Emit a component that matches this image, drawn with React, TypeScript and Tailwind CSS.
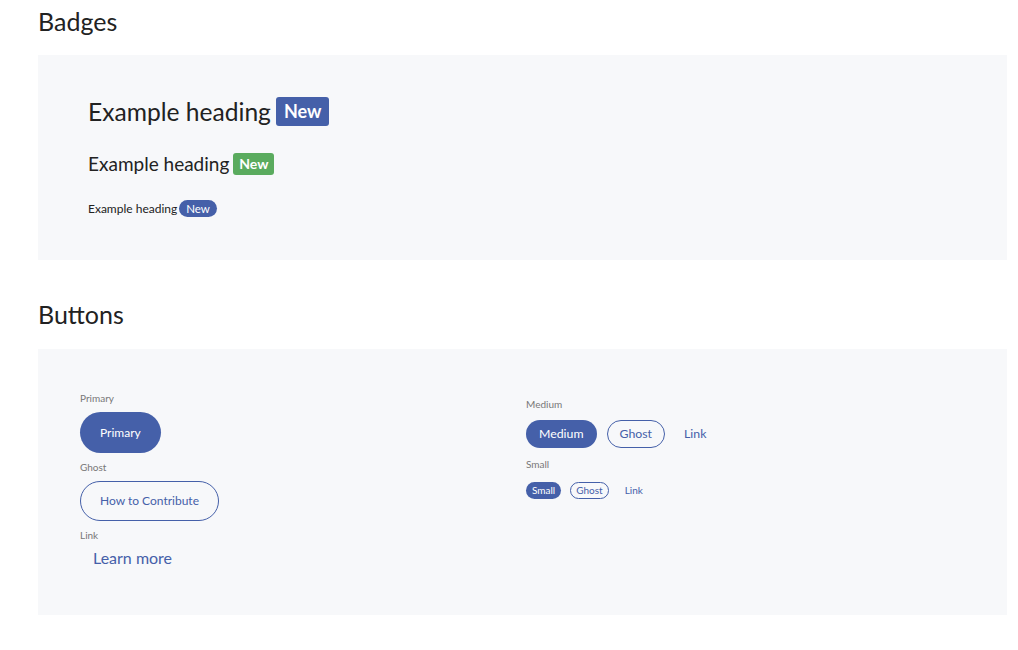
import React from "react";

const font = { fontFamily: "Lato, 'Open Sans', sans-serif" };

function Label({ children }: { children: React.ReactNode }) {
  return <div className="text-[10px] leading-[14px] text-[#777]">{children}</div>;
}

export default function App() {
  return (
    <div className="min-h-[650px] bg-white text-[#222]" style={font}>
      <div className="ml-[38px] w-[969px]">
        <h2 className="pt-[4px] text-[25px] leading-[34px] h-[55px]">Badges</h2>
        <div className="bg-[#f7f8fa] h-[205px] pl-[50px] pt-[42px]">
          <div className="flex items-center gap-[5px] h-[29px]">
            <span className="text-[24.6px] leading-[29px]">Example heading</span>
            <span className="bg-[#4560a9] text-white font-bold text-[18px] leading-[29px] h-[29px] px-[8px] rounded-[3px]">New</span>
          </div>
          <div className="flex items-center gap-[4px] h-[22px] mt-[27px]">
            <span className="text-[19px] leading-[22px]">Example heading</span>
            <span className="bg-[#5aab5e] text-white font-bold text-[14px] leading-[22px] h-[22px] px-[6px] rounded-[3px]">New</span>
          </div>
          <div className="flex items-center gap-[2px] h-[17px] mt-[25px]">
            <span className="text-[12px] leading-[17px]">Example heading</span>
            <span className="bg-[#4560a9] text-white text-[11.5px] leading-[17px] h-[17px] px-[7px] rounded-full">New</span>
          </div>
        </div>
        <h2 className="mt-[37px] text-[25px] leading-[34px] h-[52px]">Buttons</h2>
        <div className="bg-[#f7f8fa] h-[266px] pl-[42px] pt-[42px] flex">
          <div className="w-[446px] flex flex-col items-start">
            <Label>Primary</Label>
            <button className="mt-[7px] h-[41px] px-[20px] rounded-full bg-[#4560a9] text-white text-[12px]">Primary</button>
            <div className="mt-[7px]"><Label>Ghost</Label></div>
            <button className="mt-[7px] h-[40px] px-[19px] rounded-full border border-[#4560a9] text-[#4560a9] text-[12px]">How to Contribute</button>
            <div className="mt-[7px]"><Label>Link</Label></div>
            <button className="mt-[6px] px-[13px] text-[16px] leading-[20px] text-[#4560a9]">Learn more</button>
          </div>
          <div className="flex flex-col items-start pt-[6px]">
            <Label>Medium</Label>
            <div className="flex items-center mt-[9px]">
              <button className="h-[28px] px-[13px] rounded-full bg-[#4560a9] text-white text-[12.3px]">Medium</button>
              <button className="ml-[10px] h-[28px] px-[12px] rounded-full border border-[#4560a9] text-[#4560a9] text-[12.3px]">Ghost</button>
              <button className="ml-[7px] h-[28px] px-[12px] text-[#4560a9] text-[12.3px]">Link</button>
            </div>
            <div className="mt-[9px]"><Label>Small</Label></div>
            <div className="flex items-center mt-[11px]">
              <button className="h-[17px] px-[6px] rounded-full bg-[#4560a9] text-white text-[10px] leading-[17px]">Small</button>
              <button className="ml-[9px] h-[17px] px-[5px] rounded-full border border-[#4560a9] text-[#4560a9] text-[10px] leading-[15px]">Ghost</button>
              <button className="ml-[8px] h-[17px] px-[8px] text-[#4560a9] text-[10px]">Link</button>
            </div>
          </div>
        </div>
      </div>
    </div>
  );
}
